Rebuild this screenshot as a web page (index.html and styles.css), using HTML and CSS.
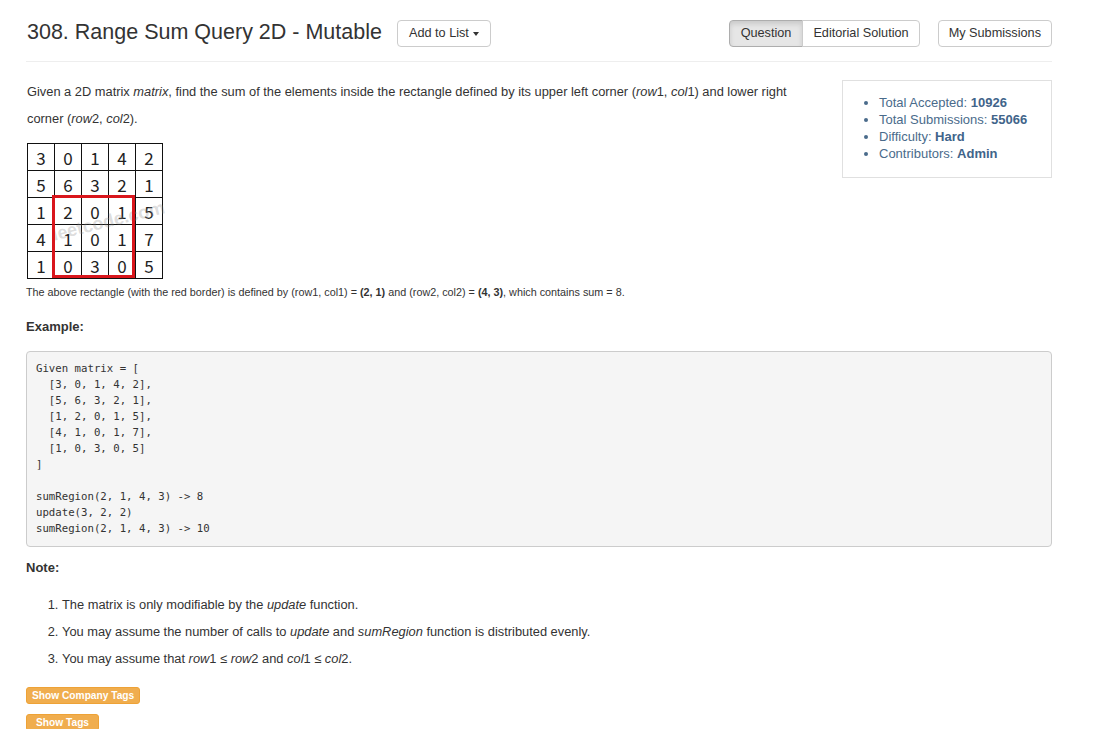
FILE: index.html
```html
<!DOCTYPE html>
<html>
<head>
<meta charset="utf-8">
<link rel="stylesheet" href="styles.css">
</head>
<body>
<div class="container">
  <div class="header">
    <h1 class="title">308. Range Sum Query 2D - Mutable</h1>
    <button class="btn add-list">Add to List <span class="caret"></span></button>
    <div class="header-right">
      <div class="btn-group">
        <button class="btn active">Question</button><button class="btn">Editorial Solution</button>
      </div>
      <button class="btn">My Submissions</button>
    </div>
  </div>
  <hr class="rule">
  <div class="top-row">
    <div class="left-col">
      <p class="desc">Given a 2D matrix <em>matrix</em>, find the sum of the elements inside the rectangle defined by its upper left corner (<em>row</em>1, <em>col</em>1) and lower right corner (<em>row</em>2, <em>col</em>2).</p>
      <div class="matrix-wrap">
        <div class="matrix">
          <div class="cell">3</div><div class="cell">0</div><div class="cell">1</div><div class="cell">4</div><div class="cell">2</div>
          <div class="cell">5</div><div class="cell">6</div><div class="cell">3</div><div class="cell">2</div><div class="cell">1</div>
          <div class="cell">1</div><div class="cell">2</div><div class="cell">0</div><div class="cell">1</div><div class="cell">5</div>
          <div class="cell">4</div><div class="cell">1</div><div class="cell">0</div><div class="cell">1</div><div class="cell">7</div>
          <div class="cell">1</div><div class="cell">0</div><div class="cell">3</div><div class="cell">0</div><div class="cell">5</div>
        </div>
        <div class="watermark">leetcode.com</div>
        <div class="red-box"></div>
      </div>
      <p class="caption">The above rectangle (with the red border) is defined by (row1, col1) = <b>(2, 1)</b> and (row2, col2) = <b>(4, 3)</b>, which contains sum = 8.</p>
    </div>
    <div class="stats">
      <ul>
        <li>Total Accepted: <b>10926</b></li>
        <li>Total Submissions: <b>55066</b></li>
        <li>Difficulty: <b>Hard</b></li>
        <li>Contributors: <b>Admin</b></li>
      </ul>
    </div>
  </div>
  <p class="label example-label">Example:</p>
  <pre class="code">Given matrix = [
  [3, 0, 1, 4, 2],
  [5, 6, 3, 2, 1],
  [1, 2, 0, 1, 5],
  [4, 1, 0, 1, 7],
  [1, 0, 3, 0, 5]
]

sumRegion(2, 1, 4, 3) -&gt; 8
update(3, 2, 2)
sumRegion(2, 1, 4, 3) -&gt; 10</pre>
  <p class="label note-label">Note:</p>
  <ol class="notes">
    <li>The matrix is only modifiable by the <em>update</em> function.</li>
    <li>You may assume the number of calls to <em>update</em> and <em>sumRegion</em> function is distributed evenly.</li>
    <li>You may assume that <em>row</em>1 ≤ <em>row</em>2 and <em>col</em>1 ≤ <em>col</em>2.</li>
  </ol>
  <div class="tags">
    <button class="tag-btn">Show Company Tags</button>
    <button class="tag-btn tag-wide">Show Tags</button>
  </div>
</div>
</body>
</html>
```

FILE: styles.css
```css
* { box-sizing: border-box; }
html, body { margin: 0; padding: 0; background: #fff; }
body {
  font-family: "Liberation Sans", Arial, sans-serif;
  font-size: 12.85px;
  color: #333;
}
.container {
  width: 1026px;
  margin-left: 26px;
}
.header {
  display: flex;
  align-items: center;
  padding-top: 20px;
  height: 47px;
}
.title {
  margin: -2px 15px 0 1px;
  font-size: 21.5px;
  font-weight: normal;
  line-height: 27px;
  color: #333;
}
.btn {
  font-family: "Liberation Sans", Arial, sans-serif;
  font-size: 12.7px;
  color: #333;
  background: #fff;
  border: 1px solid #ccc;
  border-radius: 4px;
  height: 27px;
  padding: 0 10px;
  line-height: 25px;
  cursor: pointer;
}
.add-list { padding: 0 11px; }
.btn.active { padding: 0 11px; }
.caret {
  display: inline-block;
  width: 0;
  height: 0;
  margin-left: 1px;
  vertical-align: middle;
  border-top: 4px solid #333;
  border-left: 3px solid transparent;
  border-right: 3px solid transparent;
}
.header-right {
  margin-left: auto;
  display: flex;
  gap: 18px;
}
.btn-group { display: flex; }
.btn-group .btn:first-child { border-radius: 4px 0 0 4px; }
.btn-group .btn:last-child { border-radius: 0 4px 4px 0; margin-left: -1px; }
.btn.active {
  background: #e6e6e6;
  border-color: #adadad;
  box-shadow: inset 0 3px 5px rgba(0,0,0,0.125);
}
.rule {
  margin: 14px 0 0 0;
  border: 0;
  border-top: 1px solid #eee;
  height: 0;
}
.top-row {
  display: flex;
  align-items: flex-start;
}
.left-col {
  width: 772px;
}
.desc {
  margin: 16px 0 0 1px;
  line-height: 27px;
}
.matrix-wrap {
  position: relative;
  width: 136px;
  margin: 11px 0 0 1px;
}
.matrix {
  display: grid;
  grid-template-columns: repeat(5, 26px);
  grid-auto-rows: 26px;
  gap: 1px;
  padding: 1px;
  background: #111;
}
.cell {
  background: #fff;
  display: flex;
  align-items: center;
  justify-content: center;
  font-family: "Noto Sans CJK JP", "DejaVu Sans", sans-serif;
  font-size: 17px;
  color: #222;
}
.watermark {
  position: absolute;
  left: 24px;
  top: 68px;
  font-family: "Liberation Sans", Arial, sans-serif;
  font-weight: bold;
  font-size: 18px;
  color: rgba(140,140,140,0.3);
  transform: rotate(-14deg);
  pointer-events: none;
}
.red-box {
  position: absolute;
  left: 25px;
  top: 52px;
  width: 83px;
  height: 83px;
  border: 3px solid #d9161c;
}
.caption {
  margin: 6px 0 0 0;
  font-size: 10.8px;
  line-height: 14px;
  color: #333;
}
.stats {
  width: 210px;
  margin-left: auto;
  margin-top: 18px;
  border: 1px solid #e0e0e0;
  padding: 13px 0 15px 0;
}
.stats ul {
  margin: 0;
  padding-left: 36px;
  color: #4a6b8b;
}
.stats li {
  line-height: 17px;
  font-size: 13px;
}
.stats b { color: #41648a; }
.label {
  font-weight: bold;
  font-size: 13px;
  margin: 0;
  line-height: 18px;
}
.example-label { margin-top: 19px; }
.code {
  margin: 15px 0 0 0;
  padding: 9px 9px;
  background: #f5f5f5;
  border: 1px solid #ccc;
  border-radius: 4px;
  font-family: "DejaVu Sans Mono", "Liberation Mono", monospace;
  font-size: 10.7px;
  line-height: 16px;
  color: #333;
  white-space: pre;
}
.note-label { margin-top: 12px; }
.notes {
  margin: 14px 0 0 0;
  padding-left: 36px;
}
.notes li {
  line-height: 27px;
}
.tags {
  display: flex;
  flex-direction: column;
  align-items: flex-start;
  gap: 10px;
  margin-top: 15px;
}
.tag-btn {
  font-family: "Liberation Sans", Arial, sans-serif;
  font-weight: bold;
  font-size: 10.2px;
  color: #fff;
  background: #f0ad4e;
  border: 1px solid #eea236;
  border-radius: 3px;
  padding: 0 5px;
  height: 17px;
  line-height: 15px;
}
.tag-wide { padding: 0 9px; }
```
